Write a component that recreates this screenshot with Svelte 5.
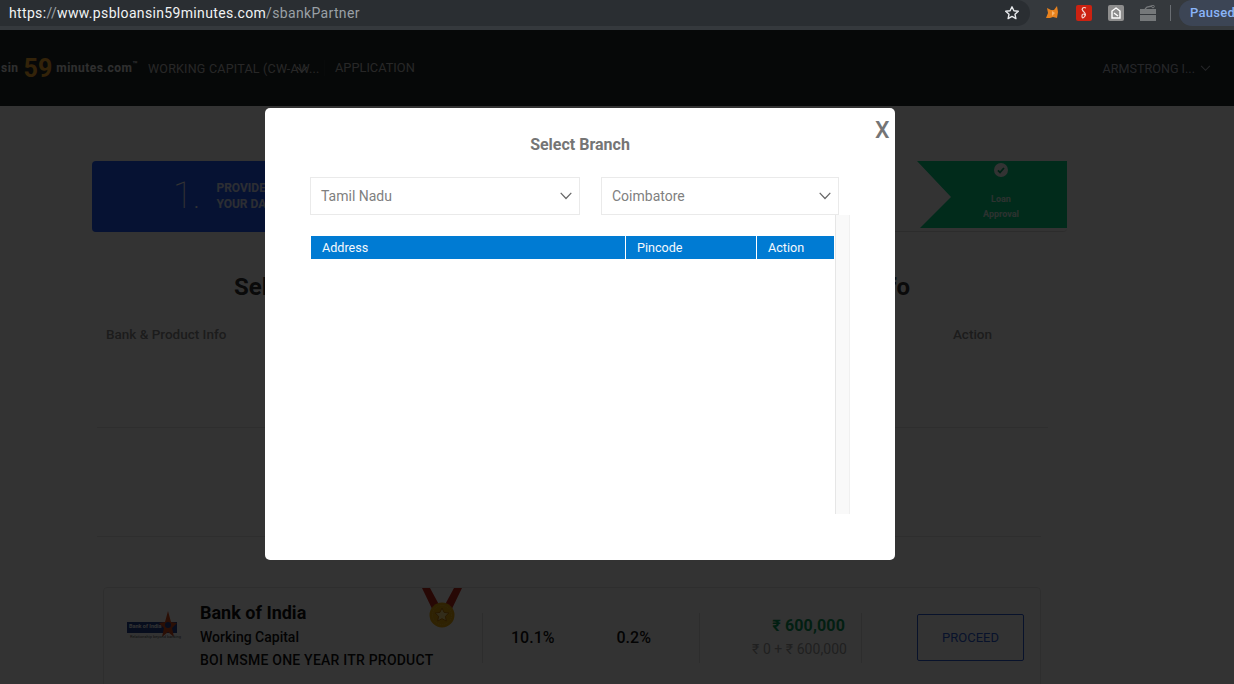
<script lang="ts">
    const columns = ["Address", "Pincode", "Action"];
</script>

<div class="toolbar">
    <div class="omnibox">
        <span class="url"><b>https:</b><i>//</i><b>www.psbloansin59minutes.com</b><i>/sbankPartner</i></span>
        <svg class="star" viewBox="0 0 16 16" width="16" height="16">
            <path d="M8 1.8l1.9 4 4.4.5-3.3 3 .9 4.3L8 11.4l-3.9 2.2.9-4.3-3.3-3 4.4-.5z" fill="none" stroke="#e8eaed" stroke-width="1.4" stroke-linejoin="round" />
        </svg>
    </div>
    <div class="extensions">
        <svg viewBox="0 0 16 16" width="16" height="16">
            <path d="M2 13l2-5-1-5 4 2h3l3-4 1 6-1 6-4-1-3 1z" fill="#e8821e" />
            <path d="M8 6l3 2-3 3z" fill="#f6b26b" />
        </svg>
        <svg viewBox="0 0 16 16" width="16" height="16">
            <rect width="16" height="16" rx="2" fill="#cc2211" />
            <path d="M10 3C7 1.5 5 4 7 6s3.500 3 2 5-3 3-3 0 2-2 3-1" fill="none" stroke="#f5d9d5" stroke-width="1.200" />
        </svg>
        <svg viewBox="0 0 16 16" width="16" height="16">
            <rect width="16" height="16" rx="2" fill="#8e8e8e" />
            <path d="M8 3l4 3v7H4V6zM6 8l4 3" fill="none" stroke="#fff" stroke-width="1.400" />
        </svg>
        <svg viewBox="0 0 16 16" width="16" height="16">
            <path d="M0 4h16v5H0zM0 10h16v6H0z" fill="#75787a" />
            <path d="M5 4l2-2 5-1" fill="none" stroke="#75787a" stroke-width="1.300" />
            <circle cx="13" cy="1.500" r="1.300" fill="none" stroke="#75787a" />
        </svg>
        <span class="sep"></span>
        <span class="paused">Paused</span>
    </div>
</div>

<div class="page">
    <header>
        <div class="logo"><span class="psb">sin</span><span class="num">59</span><span class="psb">minutes.com</span><sup>™</sup></div>
        <div class="nav-item">
            <span class="wc">WORKING CAPITAL (CW-AW...</span>
            <svg class="nav-chev" viewBox="0 0 12 8" width="12" height="8"><path d="M1 1l5 5 5-5" fill="none" stroke="#cfcfcf" stroke-width="1.200" /></svg>
        </div>
        <span class="nav-sep"></span>
        <span class="app">APPLICATION</span>
        <div class="user">
            <span>ARMSTRONG I...</span>
            <svg viewBox="0 0 12 8" width="11" height="7"><path d="M1 1l5 5 5-5" fill="none" stroke="#b8bcc8" stroke-width="1.200" /></svg>
        </div>
    </header>

    <main>
        <div class="steps">
            <div class="step-one">
                <span class="big">1.</span>
                <span class="step-text">PROVIDE<br />YOUR DATA</span>
            </div>
            <div class="step-last">
                <svg viewBox="0 0 16 16" width="14" height="14">
                    <circle cx="8" cy="8" r="8" fill="#fff" />
                    <path d="M4.500 8.300l2.400 2.400 4.500-5" fill="none" stroke="#06a868" stroke-width="2" />
                </svg>
                <span>Loan</span>
                <span>Approval</span>
            </div>
        </div>

        <h2><span>Select</span><span>Info</span></h2>

        <div class="heads"><span>Bank &amp; Product Info</span><span>Action</span></div>

        <div class="rule first"></div>
        <div class="rule second"></div>

        <div class="card">
            <div class="bank-logo">
                <svg viewBox="0 0 50 28" width="50" height="28">
                    <rect x="0" y="11" width="50" height="11" fill="#24408f" />
                    <path d="M41 0l3 11 6 1-5 5 2 9-6-5-6 5 2-9-5-5 6-1z" fill="#d84a1c" />
                    <circle cx="41" cy="14" r="3" fill="#24408f" />
                </svg>
                <span class="bank-name">Bank of India</span>
                <span class="bank-tag">Relationship beyond banking</span>
            </div>
            <div class="bank-info">
                <strong>Bank of India</strong>
                <span>Working Capital</span>
                <span class="product">BOI MSME ONE YEAR ITR PRODUCT</span>
            </div>
            <svg class="medal" viewBox="0 0 40 40" width="40" height="40">
                <path d="M0 0h8l13 24-7 5z" fill="#c4281c" />
                <path d="M40 0h-8L19 24l7 5z" fill="#c4281c" />
                <circle cx="20" cy="27" r="12.500" fill="#e8a80c" />
                <circle cx="20" cy="27" r="9.500" fill="none" stroke="#f4c63a" stroke-dasharray="1 1" />
                <path d="M20 20l2.100 4.400 4.800.6-3.500 3.300.9 4.700-4.300-2.300-4.300 2.300.9-4.700-3.500-3.300 4.800-.6z" fill="#f8dc80" stroke="#c47a08" />
            </svg>
            <div class="rates">
                <span>10.1%</span>
                <span>0.2%</span>
            </div>
            <div class="amounts">
                <b>₹ 600,000</b>
                <span>₹ 0 + ₹ 600,000</span>
            </div>
            <div class="proceed-wrap">
                <button class="proceed">PROCEED</button>
            </div>
        </div>
    </main>

    <div class="overlay"></div>

    <div class="modal">
        <span class="close">X</span>
        <h3>Select Branch</h3>
        <div class="selects">
            <div class="select state">
                Tamil Nadu
                <svg viewBox="0 0 12 8" width="12" height="8"><path d="M.7.8L6 6.500 11.300.8" fill="none" stroke="#666" stroke-width="1.200" /></svg>
            </div>
            <div class="select city">
                Coimbatore
                <svg viewBox="0 0 12 8" width="12" height="8"><path d="M.7.8L6 6.500 11.300.8" fill="none" stroke="#666" stroke-width="1.200" /></svg>
            </div>
        </div>
        <div class="scroller">
            <div class="table-area">
                <div class="thead">
                    {#each columns as col}
                        <div class="th">{col}</div>
                    {/each}
                </div>
            </div>
            <div class="scrollbar"></div>
        </div>
    </div>
</div>

<style>
    :global(body) {
        margin: 0;
        background: #fff;
        overflow: hidden;
    }

    * {
        box-sizing: border-box;
    }

    .toolbar {
        height: 30px;
        background: #35393d;
        display: flex;
        font-family: Roboto, "Liberation Sans", sans-serif;
        overflow: hidden;
    }

    .omnibox {
        width: 1030px;
        height: 26px;
        background: #2a2e32;
        border-radius: 0 13px 13px 0;
        display: flex;
        align-items: center;
        justify-content: space-between;
        padding: 0 10px 0 9px;
    }

    .url {
        font-size: 14px;
        letter-spacing: 0.34px;
        white-space: nowrap;
    }

    .url b {
        font-weight: 400;
        color: #f1f3f4;
    }

    .url i {
        font-style: normal;
        color: #9aa0a6;
    }

    .extensions {
        flex: 1;
        height: 26px;
        display: flex;
        align-items: center;
        gap: 16px;
        padding-left: 14px;
        min-width: 0;
    }

    .extensions svg {
        flex: none;
    }

    .sep {
        flex: none;
        width: 1px;
        height: 16px;
        background: #6a6e72;
        margin-left: -2px;
    }

    .paused {
        flex: none;
        margin-left: -8px;
        width: 80px;
        height: 26px;
        border-radius: 13px;
        background: #3c4555;
        color: #8ab4f8;
        font-size: 13px;
        font-weight: 500;
        line-height: 26px;
        padding-left: 11px;
        letter-spacing: 0.3px;
    }

    .page {
        position: relative;
        height: 654px;
        overflow: hidden;
        font-family: Roboto, "Liberation Sans", sans-serif;
        background: #fff;
    }

    header {
        height: 76px;
        background: #1e2828;
        display: flex;
        align-items: center;
        color: #cfcfcf;
        font-size: 12px;
    }

    .logo {
        width: 148px;
        flex: none;
        padding-left: 1px;
        display: flex;
        align-items: center;
        white-space: nowrap;
        font-size: 12px;
        font-weight: 700;
        color: #e8e8e8;
    }

    .psb {
        letter-spacing: 0.5px;
    }

    .num {
        font-size: 25px;
        font-weight: 700;
        color: #ffb030;
        margin: 0 4px 0 5px;
    }

    sup {
        font-size: 8px;
        align-self: flex-start;
        margin-top: 6px;
    }

    .nav-item {
        position: relative;
        width: 176px;
        flex: none;
    }

    .wc {
        font-size: 12.500px;
        letter-spacing: 0.22px;
        white-space: nowrap;
        color: #c4c4c4;
    }

    .nav-chev {
        position: absolute;
        left: 148px;
        top: 5px;
    }

    .nav-sep {
        width: 1px;
        height: 16px;
        background: #2c3232;
        flex: none;
    }

    .app {
        margin-left: 10px;
        font-size: 12.800px;
        margin-top: -2px;
        color: #c4c4c4;
    }

    .user {
        margin-left: auto;
        margin-right: 23px;
        display: flex;
        align-items: center;
        gap: 5px;
        color: #b8bcc8;
        font-size: 12.600px;
    }

    main {
        padding-top: 55px;
    }

    .steps {
        margin-left: 92px;
        width: 975px;
        height: 71px;
        display: flex;
        justify-content: space-between;
        align-items: flex-start;
        border-bottom: 1px solid #ddd;
        border-radius: 4px;
    }

    .step-one {
        width: 300px;
        height: 71px;
        background: #1e5aff;
        border-radius: 4px;
        display: flex;
        align-items: center;
        padding: 0 0 2px 81px;
        color: #fff;
    }

    .big {
        font-size: 36px;
        font-weight: 100;
        margin-right: 16px;
    }

    .step-text {
        font-size: 12px;
        font-weight: 700;
        line-height: 16px;
        opacity: 0.85;
    }

    .step-last {
        width: 150px;
        height: 67px;
        background: #06d487;
        clip-path: polygon(0 0, 100% 0, 100% 100%, 3px 100%, 34px 36px);
        display: flex;
        flex-direction: column;
        align-items: center;
        padding: 2px 0 0 18px;
        color: #fff;
        font-size: 9px;
        font-weight: 700;
    }

    .step-last svg {
        margin-bottom: 15px;
    }

    .step-last span {
        line-height: 15px;
        opacity: 0.85;
    }

    h2 {
        margin: 41px 0 0 234px;
        width: 676px;
        display: flex;
        justify-content: space-between;
        font-size: 24px;
        line-height: 28px;
        font-weight: 700;
        color: #333;
    }

    .heads {
        margin: 25px 0 0 106px;
        width: 886px;
        display: flex;
        justify-content: space-between;
        font-size: 13.500px;
        line-height: 16px;
        font-weight: 500;
        color: #8c8c8c;
    }

    .rule {
        height: 1px;
        background: #e6e6e6;
        margin-left: 97px;
    }

    .rule.first {
        margin-top: 85px;
        width: 951px;
    }

    .rule.second {
        margin-top: 108px;
        width: 944px;
    }

    .card {
        position: relative;
        margin: 50px 0 0 103px;
        width: 938px;
        height: 120px;
        border: 1px solid #e6e6e6;
        border-radius: 4px;
        display: flex;
        color: #222;
    }

    .bank-logo {
        position: relative;
        width: 96px;
        flex: none;
        padding: 23px 0 0 23px;
    }

    .bank-name {
        position: absolute;
        left: 25px;
        top: 35px;
        font-size: 5.500px;
        font-weight: 700;
        color: #fff;
        white-space: nowrap;
    }

    .bank-tag {
        position: absolute;
        left: 26px;
        top: 46px;
        font-size: 4px;
        white-space: nowrap;
        color: #555;
    }

    .bank-info {
        width: 282px;
        flex: none;
        display: flex;
        flex-direction: column;
        padding-top: 13px;
        font-size: 14px;
        font-weight: 500;
        color: #111;
    }

    .bank-info strong {
        font-size: 18px;
        line-height: 24px;
        color: #111;
        margin-bottom: 1px;
    }

    .bank-info span {
        line-height: 23px;
    }

    .bank-info .product {
        letter-spacing: 0.22px;
    }

    .medal {
        position: absolute;
        left: 318px;
        top: 0;
    }

    .rates {
        width: 218px;
        flex: none;
        height: 50px;
        margin-top: 25px;
        border-left: 1px solid #e0e0e0;
        border-right: 1px solid #e0e0e0;
        display: flex;
        align-items: center;
        padding: 0 0 2px 28px;
        gap: 62px;
        font-size: 16px;
        font-weight: 500;
        color: #111;
    }

    .amounts {
        width: 162px;
        flex: none;
        height: 50px;
        margin-top: 25px;
        border-right: 1px solid #e0e0e0;
        display: flex;
        flex-direction: column;
        align-items: flex-end;
        padding-right: 14px;
        font-size: 14px;
        letter-spacing: 0.05px;
        color: #a0a0a0;
    }

    .amounts b {
        font-size: 16px;
        line-height: 26px;
        letter-spacing: 0.15px;
        color: #0b9a5c;
        margin-right: 2px;
    }

    .amounts span {
        line-height: 20px;
    }

    .proceed-wrap {
        padding: 26px 0 0 55px;
    }

    .proceed {
        width: 107px;
        height: 47px;
        border: 1px solid #2c5cd8;
        border-radius: 2px;
        background: #fff;
        color: #2c5cd8;
        font: 400 13px Roboto, "Liberation Sans", sans-serif;
        padding: 0;
    }

    .overlay {
        position: absolute;
        inset: 0;
        background: rgba(0, 0, 0, 0.8);
    }

    .modal {
        position: absolute;
        left: 265px;
        top: 78px;
        width: 630px;
        height: 452px;
        background: #fff;
        border-radius: 5px;
        padding: 28px 45px 0;
    }

    .close {
        position: absolute;
        left: 610px;
        top: 10px;
        font-size: 23px;
        font-weight: 500;
        line-height: 26px;
        color: #757575;
    }

    h3 {
        margin: 0;
        width: 540px;
        text-align: center;
        font-size: 16px;
        line-height: 17px;
        font-weight: 700;
        color: #757575;
    }

    .selects {
        display: flex;
        gap: 21px;
        margin-top: 24px;
    }

    .select {
        height: 38px;
        border: 1px solid #eaeaea;
        display: flex;
        align-items: center;
        justify-content: space-between;
        padding: 0 7px 0 10px;
        font-size: 14px;
        color: #808080;
    }

    .state {
        width: 270px;
    }

    .city {
        width: 238px;
    }

    .scroller {
        display: flex;
        width: 540px;
        height: 299px;
    }

    .table-area {
        width: 525px;
        padding: 21px 0 0 1px;
    }

    .thead {
        display: grid;
        grid-template-columns: 314px 131px 78px;
        height: 23px;
    }

    .th {
        background: #007bd3;
        color: #f4f8fc;
        font-size: 12.600px;
        line-height: 23px;
        padding-left: 11px;
    }

    .th + .th {
        border-left: 1px solid #fff;
    }

    .scrollbar {
        width: 15px;
        background: #f9f9f9;
        border-left: 1px solid #e6e6e6;
        border-right: 1px solid #f0f0f0;
    }
</style>
